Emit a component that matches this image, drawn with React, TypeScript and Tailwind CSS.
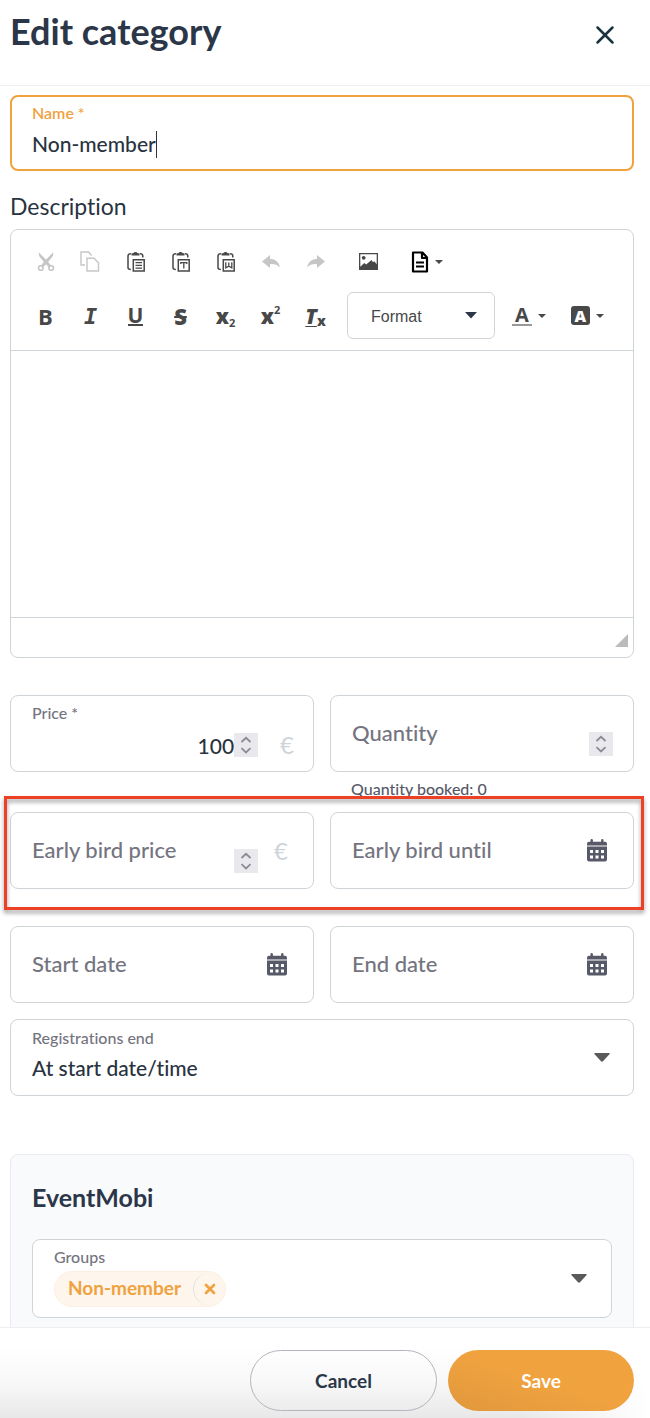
import type { ReactNode } from "react";
import { X } from "lucide-react";
import clsx from "clsx";

const labelSmall = "text-base leading-5 font-medium text-[#74747f]";
const labelLarge = "shrink-0 pb-0.5 text-[22px] leading-7 font-medium text-[#74747f]";
const valueText = "bg-transparent text-[21px] leading-7 font-medium text-[#29333f] outline-none";
const fieldBox = "flex h-[77px] rounded-lg border border-[#cfd4d9] bg-white";

function Triangle({ className }: { className?: string }) {
  return (
    <svg viewBox="0 0 16 9" className={className} fill="currentColor" aria-hidden="true">
      <path d="M1 0h14q1.200 .3 .4 1.300L9 8.300q-1 .9-2 0L.6 1.300Q-.2.300 1 0Z" />
    </svg>
  );
}

function Stepper() {
  return (
    <button type="button" aria-label="Change value" className="flex size-6 shrink-0 items-center justify-center bg-[#e9e8ed] text-[#8b8a96]">
      <svg viewBox="0 0 24 24" className="size-6" fill="none" stroke="currentColor" strokeWidth="1.800">
        <path d="m7.500 9 4.500-4.200L16.500 9M7.500 15.200l4.500 4.200 4.500-4.200" />
      </svg>
    </button>
  );
}

function DateField({ id, label }: { id: string; label: string }) {
  return (
    <div className={clsx(fieldBox, "items-center pr-[26px] pl-[21px]")}>
      <label htmlFor={id} className={labelLarge}>{label}</label>
      <input id={id} type="text" className={clsx(valueText, "min-w-0 flex-1")} />
      <button type="button" aria-label={`Pick ${label.toLowerCase()}`} className="text-[#575968]">
        <svg viewBox="0 0 20 23" className="h-[23px] w-5" fill="currentColor">
          <path d="M3.500 1.200a1.200 1.200 0 0 1 2.400 0V2.700h8.200V1.200a1.200 1.200 0 0 1 2.400 0V2.700H18a2 2 0 0 1 2 2v1.800H0V4.700a2 2 0 0 1 2-2h1.500Z" />
          <path
            fillRule="evenodd"
            d="M0 7.600h20v13a2 2 0 0 1-2 2H2a2 2 0 0 1-2-2Zm3 3.400v3h3v-3Zm5.500 0v3h3v-3Zm5.500 0v3h3v-3ZM3 16.500v3h3v-3Zm5.500 0v3h3v-3Zm5.500 0v3h3v-3Z"
          />
        </svg>
      </button>
    </div>
  );
}

function Tool({ label, disabled, children }: { label: string; disabled?: boolean; children: ReactNode }) {
  return (
    <button
      type="button"
      aria-label={label}
      disabled={disabled}
      className={clsx("flex h-[47px] w-[45px] items-center justify-center", disabled ? "text-[#c6c6c6]" : "text-[#484848]")}
    >
      {children}
    </button>
  );
}

function MenuTool({ label, children }: { label: string; children: ReactNode }) {
  return (
    <button type="button" aria-label={label} className="flex h-[47px] items-center gap-1.5 text-[#484848]">
      {children}
      <svg viewBox="0 0 8 4" className="h-1 w-2" fill="currentColor"><path d="M0 0h8L4 4Z" /></svg>
    </button>
  );
}

function Clipboard({ children }: { children?: ReactNode }) {
  return (
    <svg viewBox="0 0 18 20" className="h-5 w-[18px]" fill="none" stroke="currentColor" strokeWidth="1.500">
      <path d="M4 1.800Q1 1.800 1 4v11.500q0 2 2.800 2M13 1.800q2.800 0 2.800 2.200v1.500" />
      <path d="M4.500 3.400V1.300h1.800Q6.800 0 8.500 0t2.200 1.300h1.800v2.100Z" fill="currentColor" stroke="none" />
      <path d="M6.300 7.800h10.900v11.200H6.300Z" />
      {children}
    </svg>
  );
}

function ClipboardRow() {
  return (
    <div className="flex items-center">
      <Tool label="Cut" disabled>
        <svg viewBox="0 0 18 20" className="h-5 w-[18px]" fill="none" stroke="currentColor">
          <g fill="currentColor" stroke="none">
            <path d="M2 .5Q1.200 3 3 5.300L7.300 10.500 12 15.500l2-2L10.800 9.500Z" />
            <path d="M16 .5q.8 2.500-1 4.800L10.700 10.500 6 15.500l-2-2L7.200 9.500Z" />
          </g>
          <circle cx="3.800" cy="16" r="2.300" strokeWidth="1.600" />
          <circle cx="14.200" cy="16" r="2.300" strokeWidth="1.600" />
        </svg>
      </Tool>
      <Tool label="Copy" disabled>
        <svg viewBox="0 0 20 21" className="mr-0.5 h-[21px] w-5" fill="none" stroke="currentColor" strokeWidth="1.400">
          <path d="M5 14H1V1h7.500l3 3.500" />
          <path d="M7 7.300h7l4.500 4.500V20H7Z" />
        </svg>
      </Tool>
      <Tool label="Paste">
        <Clipboard><path d="M8.500 10.700h6.500M8.500 13.400h6.500M8.500 16.100h6.500" strokeWidth="1.200" /></Clipboard>
      </Tool>
      <Tool label="Paste as plain text">
        <Clipboard><path d="M8.800 12v-1.400h6V12M11.800 10.600v5.800" strokeWidth="1.300" /></Clipboard>
      </Tool>
      <Tool label="Paste from Word">
        <Clipboard><path d="M8.800 10.200v5.600l3-1.600 3 1.600v-5.600M11.800 10.500v4" strokeWidth="1.300" /></Clipboard>
      </Tool>
      <Tool label="Undo" disabled>
        <svg viewBox="0 0 18 14" className="h-3.5 w-[18px]" fill="currentColor"><path d="M0 6.500 8 0v3.700q8.500.5 10 8.800-4-4-10-3.300V13Z" /></svg>
      </Tool>
      <Tool label="Redo" disabled>
        <svg viewBox="0 0 18 14" className="h-3.5 w-[18px]" fill="currentColor"><path d="M18 6.500 10 0v3.700Q1.500 4.200 0 12.500q4-4 10-3.300V13Z" /></svg>
      </Tool>
      <div className="mr-5 ml-2">
        <Tool label="Image">
          <svg viewBox="0 0 19 17" className="h-[17px] w-[19px]" fill="currentColor">
            <path fillRule="evenodd" d="M0 0h19v17H0Zm1.300 1.300v12.400l4-3.700 1.900 1.500L12.500 7l1.500 2.300 1.300-1 2.400 3V1.300Z" />
            <circle cx="4.700" cy="4.800" r="1.900" />
          </svg>
        </Tool>
      </div>
      <MenuTool label="Templates">
        <svg viewBox="0 0 18 22" className="h-[22px] w-[18px] text-black" fill="none" stroke="currentColor" strokeWidth="2.200">
          <path d="M2 1.500h9.500L16 6.500v14H2ZM11 1.500V7h5" strokeLinejoin="round" />
          <path d="M5 11.500h8M5 15.500h8" />
        </svg>
      </MenuTool>
    </div>
  );
}

function FormatRow() {
  return (
    <div className="flex items-center font-['Open_Sans',sans-serif] font-extrabold">
      <Tool label="Bold"><span className="text-[22px] leading-6 font-bold">B</span></Tool>
      <Tool label="Italic"><span className="pt-0.5 font-['DejaVu_Sans_Mono',monospace] text-[22px] leading-6 italic">I</span></Tool>
      <Tool label="Underline">
        <span className="border-b-2 border-current text-[21px] leading-[18px] font-bold">U</span>
      </Tool>
      <Tool label="Strikethrough"><span className="text-[22px] leading-6 line-through decoration-2">S</span></Tool>
      <Tool label="Subscript"><span className="text-[21px] leading-6">x</span><span className="self-end pb-2 text-[11px] font-bold">2</span></Tool>
      <Tool label="Superscript"><span className="text-[21px] leading-6">x</span><span className="self-start pt-2.5 text-[11px] font-bold">2</span></Tool>
      <Tool label="Remove format">
        <span className="text-[21px] leading-6 italic underline decoration-1 underline-offset-2">T</span>
        <span className="self-end pb-2 text-[14px]">x</span>
      </Tool>
      <div className="ml-[9px] grid h-[47px] w-[148px] items-center rounded-md border border-[#cfd4d9] font-['Liberation_Sans',sans-serif] font-normal text-[#484848]">
        <select aria-label="Format" className="h-full w-full appearance-none bg-transparent pt-0.5 pl-[23px] text-base outline-none [grid-area:1/1]">
          <option>Format</option>
        </select>
        <svg viewBox="0 0 12 7" className="pointer-events-none mr-[17px] h-[7px] w-3 justify-self-end text-[#2b3648] [grid-area:1/1]" fill="currentColor"><path d="M0 0h12L6 6.500Z" /></svg>
      </div>
      <div className="ml-[17px] flex gap-[25px]">
        <MenuTool label="Text color">
          <span className="border-b-2 border-[#999] px-[3px] text-[20px] leading-[18px] font-bold">A</span>
        </MenuTool>
        <MenuTool label="Background color">
          <span className="flex size-[19px] items-center justify-center rounded-[3px] bg-[#484848] text-base text-white">A</span>
        </MenuTool>
      </div>
    </div>
  );
}

function Editor() {
  return (
    <div className="rounded-lg border border-[#cfd4d9] bg-white">
      <div className="flex flex-col gap-[7px] border-b border-[#cfd4d9] px-3 pt-2 pb-[11px]">
        <ClipboardRow />
        <FormatRow />
      </div>
      <textarea id="description" className="block h-[266px] w-full resize-none px-5 py-4 outline-none" />
      <div className="flex h-10 items-end justify-end border-t border-[#cfd4d9] px-[5px] pb-2.5">
        <svg viewBox="0 0 13 13" className="size-[13px] text-[#bbb]" fill="currentColor"><path d="M13 0v13H0Z" /></svg>
      </div>
    </div>
  );
}

export default function App() {
  return (
    <div className="flex h-screen flex-col bg-white font-[Lato,sans-serif] text-[#29333f] [font-variant-ligatures:none]">
      <header className="flex h-[86px] shrink-0 items-start justify-between border-b border-[#eee] pt-2 pr-[30px] pl-2.5">
        <h1 className="text-[36px] leading-[46px] font-bold text-[#2b3648]">Edit category</h1>
        <button type="button" aria-label="Close" className="mt-3 text-[#193340]">
          <X className="size-[30px]" />
        </button>
      </header>

      <main className="min-h-0 flex-1 overflow-y-auto pt-[9px] pr-4 pl-2.5 [scrollbar-width:none]">
        <div className="flex h-[76px] flex-col rounded-lg border-2 border-[#f0a23f] px-5 pt-1.5">
          <label htmlFor="name" className="text-base leading-5 font-semibold text-[#f0a23f]">Name *</label>
          <div className="mt-[7px] flex items-center">
            <input id="name" type="text" defaultValue="Non-member" className={clsx(valueText, "field-sizing-content")} />
            <span className="h-[27px] w-px bg-[#29333f]" />
          </div>
        </div>

        <label htmlFor="description" className="mt-[21px] mb-[9px] block text-[23px] leading-7">Description</label>
        <Editor />

        <div className="mt-[37px] grid grid-cols-2 gap-4">
          <div className={clsx(fieldBox, "flex-col pt-[7px] pr-[19px] pl-[21px]")}>
            <label htmlFor="price" className={labelSmall}>Price *</label>
            <div className="mt-[7px] flex items-center">
              <input id="price" type="text" inputMode="decimal" defaultValue="100" className={clsx(valueText, "min-w-0 flex-1 pt-0.5 text-right")} />
              <Stepper />
              <span className="ml-[22px] text-2xl leading-6 text-[#cfd4d9]">€</span>
            </div>
          </div>
          <div>
            <div className={clsx(fieldBox, "items-center pr-5 pl-[21px]")}>
              <label htmlFor="quantity" className={labelLarge}>Quantity</label>
              <input id="quantity" type="text" inputMode="numeric" className={clsx(valueText, "min-w-0 flex-1")} />
              <div className="pt-5"><Stepper /></div>
            </div>
            <p className="mt-[7px] mb-px pl-[21px] text-base leading-5 font-medium text-[#575968]">Quantity booked: 0</p>
          </div>
        </div>

        <div className="relative mt-3 grid grid-cols-2 gap-4">
          <div className={clsx(fieldBox, "items-center pr-[25px] pl-[21px]")}>
            <label htmlFor="early-price" className={labelLarge}>Early bird price</label>
            <input id="early-price" type="text" inputMode="decimal" className={clsx(valueText, "min-w-0 flex-1")} />
            <div className="pt-5"><Stepper /></div>
            <span className="ml-4 text-2xl text-[#cfd4d9]">€</span>
          </div>
          <DateField id="early-until" label="Early bird until" />
          <div className="pointer-events-none absolute -top-4 -right-2.5 -bottom-[21px] -left-1.5 border-3 border-[#ec4125] drop-shadow-[0_3px_2px_rgba(0,0,0,0.4)]" />
        </div>

        <div className="mt-[37px] grid grid-cols-2 gap-4">
          <DateField id="start" label="Start date" />
          <DateField id="end" label="End date" />
        </div>

        <div className={clsx(fieldBox, "mt-4 items-center pr-[23px] pl-[21px]")}>
          <div className="flex min-w-0 flex-1 flex-col gap-1.5 pb-1.5">
            <label htmlFor="reg-end" className={labelSmall}>Registrations end</label>
            <select id="reg-end" className={clsx(valueText, "w-full appearance-none")}>
              <option>At start date/time</option>
            </select>
          </div>
          <Triangle className="h-[9px] w-4 text-[#5a5a5a]" />
        </div>

        <section className="mt-[58px] rounded-lg border border-[#e8ebef] bg-[#f9fafc] px-[21px] pt-[26px] pb-8">
          <h2 className="text-[25px] leading-8 font-bold text-[#2b3648]">EventMobi</h2>
          <div className="mt-[26px] flex h-[79px] items-center rounded-lg border border-[#cfd4d9] bg-white pr-6 pl-[21px]">
            <div className="flex flex-1 flex-col items-start gap-1 pb-1">
              <span className={labelSmall}>Groups</span>
              <div className="flex h-9 items-center rounded-full border border-[#fdf0e0] bg-[#fef6ec] pl-[13px] text-[19px] font-bold text-[#f0a23f]">
                Non-member
                <button type="button" aria-label="Remove Non-member" className="ml-3 flex size-8 items-center justify-center rounded-full border-l border-[#dfe1e4]">
                  <X className="size-4" strokeWidth={4} />
                </button>
              </div>
            </div>
            <Triangle className="h-[9px] w-4 text-[#5a5a5a]" />
          </div>
        </section>
      </main>

      <footer className="flex shrink-0 justify-end gap-[11px] border-t border-[#eee] bg-[linear-gradient(to_right,rgba(255,255,255,0)_80%,white),linear-gradient(to_bottom,white_20%,#f8f8f8_60%,#e8e8e8)] pt-[22px] pr-4 pb-[7px] text-[19px] font-bold">
        <button type="button" className="h-[61px] w-[187px] rounded-full border border-[#b3b6bc] pt-0.5 text-[#2b3648]">Cancel</button>
        <button type="button" className="h-[61px] w-[186px] rounded-full bg-linear-to-tr from-[#e0983c] to-[#f0a23f] to-50% pt-0.5 text-white">Save</button>
      </footer>
    </div>
  );
}
